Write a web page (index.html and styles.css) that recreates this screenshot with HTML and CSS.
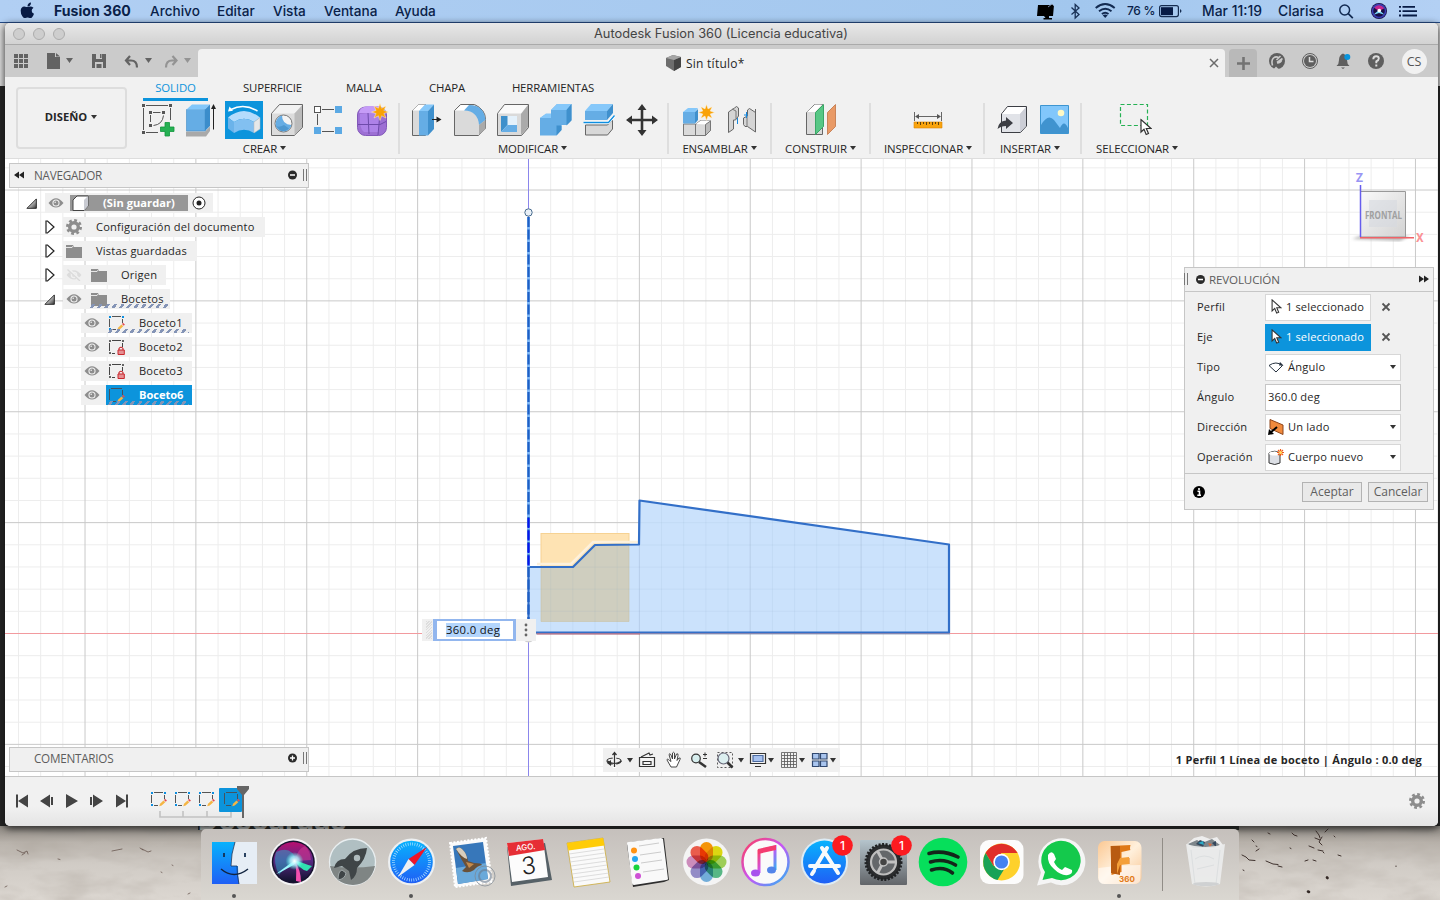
FILE: index.html
```html
<!DOCTYPE html>
<html lang="es">
<head>
<meta charset="utf-8">
<title>Autodesk Fusion 360 (Licencia educativa)</title>
<link rel="stylesheet" href="styles.css">
</head>
<body>
<svg class="defs" width="0" height="0" aria-hidden="true">
  <defs>
    <symbol id="eye" viewBox="0 0 16 12"><path d="M0.5 6Q8-3.5 15.500 6Q8 15 .5 6z" fill="#8d8d8d"/><circle cx="8" cy="6" r="3.600" fill="#f0f0f0"/><circle cx="8" cy="6" r="2.500" fill="#8d8d8d"/><circle cx="7.200" cy="5.200" r=".8" fill="#eee"/></symbol>
    <symbol id="eye-off" viewBox="0 0 16 12"><path d="M.5 6Q8-3.500 15.500 6Q8 15 .5 6z" fill="#dcdcdc"/><circle cx="8" cy="6" r="3.300" fill="#f0f0f0"/><circle cx="8" cy="6" r="2" fill="#dcdcdc"/><path d="M2 0L15 12" stroke="#f0f0f0" stroke-width="3"/><path d="M1.500 .5L14 12" stroke="#dadada" stroke-width="1.300"/></symbol>
    <symbol id="folder" viewBox="0 0 16 13"><path d="M0 0h7l1 2h8v11H0z" fill="#8d8d8d"/><path d="M0 2.500h6l1.200-1.600" stroke="#f0f0f0" fill="none" stroke-width=".9"/></symbol>
    <symbol id="gear" viewBox="0 0 16 16"><circle cx="8" cy="8" r="6.600" fill="none" stroke="#8d8d8d" stroke-width="2.800" stroke-dasharray="2.750 2.430"/><circle cx="8" cy="8" r="4.300" fill="none" stroke="#8d8d8d" stroke-width="3.400"/></symbol>
    <symbol id="sk" viewBox="0 0 17 16"><path d="M4 1.500h9M1.500 4v8M14.500 4v4M4 14.500h4" stroke="#555" fill="none"/><path d="M1 1h2v2H1zM14 1h2v2h-2zM1 13h2v2H1z" fill="#0d8ee0"/><path d="M9.200 15.300l.8-2.600 3.500-3.200 1.800 1.700-3.600 3.400z" fill="#f5b544"/><path d="M14 9l1-1.200 1.900 1.700-1.100 1.200z" fill="#e34b50"/></symbol>
    <symbol id="sk-sel" viewBox="0 0 17 16"><path d="M3 1.500h11M1.500 2v11M14.500 3v5M3 14.500h5" stroke="#46525e" fill="none"/><path d="M9.200 15.300l.8-2.600 3.500-3.200 1.800 1.700-3.600 3.400z" fill="#f5b544"/><path d="M14 9l1-1.200 1.900 1.700-1.100 1.200z" fill="#e34b50"/></symbol>
    <symbol id="sk-lock" viewBox="0 0 17 16"><path d="M4 1.500h9M1.500 4v8M14.500 4v4M4 14.500h3" stroke="#444" fill="none"/><path d="M1 1h2v2H1zM14 1h2v2h-2zM1 13h2v2H1z" fill="#666"/><path d="M11 11V9.500q2-2.500 4 0V11" stroke="#c9272c" fill="none" stroke-width="1.100"/><path d="M10 11h6.300v4.500H10z" fill="#e58f92" stroke="#c9272c"/></symbol>
    <symbol id="cursor" viewBox="0 0 12 17"><path d="M1 1v12.500l3-2.800 2.200 5.300 2.300-1-2.200-5H11z" fill="#fff" stroke="#333" stroke-width="1.200"/></symbol>
    <symbol id="star" viewBox="-9 -9 18 18"><path d="M0-8.500L1.600-3.800 6-6 3.900-1.600 8.500 0 3.900 1.600 6 6 1.600 3.800 0 8.500-1.600 3.800-6 6-3.900 1.600-8.500 0-3.900-1.600-6-6-1.600-3.800z" fill="#f9a207" stroke="#fff3d6" stroke-width=".5"/></symbol>
    <symbol id="close" viewBox="0 0 10 10"><path d="M1.500 1.500l7 7M8.500 1.500l-7 7" stroke="#555" stroke-width="1.800"/></symbol>
    <linearGradient id="tri" x1="0" y1="0" x2="1" y2="1"><stop offset=".3" stop-color="#eee"/><stop offset="1" stop-color="#333"/></linearGradient>
    <symbol id="tri-open" viewBox="0 0 12 12"><path d="M1 11.300L11.300 1v10.300z" fill="url(#tri)" stroke="#222"/></symbol>
    <symbol id="tri-closed" viewBox="0 0 10 14"><path d="M1 1h1.500L9 7l-6.500 6H1z" fill="#fff" stroke="#222" stroke-width="1.200"/></symbol>
    <linearGradient id="blueG" x1="0" y1="0" x2="0" y2="1"><stop offset="0" stop-color="#08b2fd"/><stop offset="1" stop-color="#1f5ff5"/></linearGradient>
    <radialGradient id="siri" cx=".55" cy=".5" r=".55"><stop offset="0" stop-color="#fff"/><stop offset=".22" stop-color="#72e4f4"/><stop offset=".55" stop-color="#513496"/><stop offset="1" stop-color="#150d35"/></radialGradient>
  </defs>
</svg>

<svg class="wallpaper" viewBox="0 0 1440 900" aria-hidden="true">
  <defs>
    <linearGradient id="sand" x1="0" y1="0" x2="0" y2="1"><stop offset="0" stop-color="#85817b"/><stop offset=".22" stop-color="#b9b3ac"/><stop offset=".5" stop-color="#d0cbc5"/><stop offset="1" stop-color="#dcd7d1"/></linearGradient>
    <filter id="grain" x="0" y="0" width="100%" height="100%"><feTurbulence type="fractalNoise" baseFrequency=".02 .05" numOctaves="4" seed="8"/><feColorMatrix values="0 0 0 0 .4 0 0 0 0 .36 0 0 0 0 .32 .8 0 0 0 -.3"/></filter>
  </defs>
  <rect width="1440" height="86" fill="#dedede"/><rect y="86" width="1440" height="745" fill="#242424"/>
  <rect y="826" width="1440" height="74" fill="url(#sand)"/>
  <rect y="826" width="1440" height="74" filter="url(#grain)"/>
  <rect x="198" y="820" width="1041" height="10" fill="#262a28"/>
  <g stroke="#5d4a43" fill="none" stroke-width=".7" stroke-linecap="round">
    <path d="M17 850l6 3 4-2 1 3M58 859l2 .5M112 851l10-2M142 849l6 3 3-1M22 855l3-2M172 865l1 .5M5 887l2-1M161 872l1 .5M188 894l2-1M140 848l3 2"/>
    <path stroke-width="1" stroke="#40332f" d="M1242 855l4 2 3 3 6 .5M1252 840l2 2M1256 846l1 .5M1266 861l7 3 5 .5M1278 866l4 1M1292 833l2 2 3 1M1309 846l5 2M1318 850l5 1M1316 831l3 4 1 3M1322 837l-3 5 3 3M1328 829l-3 3M1315 838l5 2M1305 861l3-1M1313 860l3 1M1323 852l1 1M1334 836l1 1M1338 855l3 1M1290 848l1 .5M1243 870l1 .5M1396 866v.5M1256 851l3-2M1268 833l2 1"/>
    <path stroke-width="2.600" stroke="#332825" d="M1308 891.500l1 .5M1327 877.500l.5.500"/>
  </g>
</svg>
<div class="desk-label">Descargas</div>

<header class="menubar">
  <svg class="apple" viewBox="20 2 15 17"><path d="M31 2.500q.2 2-1.200 3.200-1 1-2.300.8-.1-1.500.9-2.700 1.100-1.200 2.600-1.300zM33.500 7.700q-2 1.200-1.800 3.200.2 2 2.300 2.900-.6 1.700-1.700 3.100-.9 1.200-2 1.200-.8 0-1.500-.4-1.300-.5-2.500 0-1 .5-1.700.4-1-.1-2.100-1.700-2-3-1.800-6 .3-3.700 3.600-4 .9 0 2 .5.900.4 1.700 0 1-.5 2.100-.5 2 0 3.400 1.300z" fill="#071b45"/></svg>
  <nav class="menus"><b>Fusion 360</b><span>Archivo</span><span>Editar</span><span>Vista</span><span>Ventana</span><span>Ayuda</span></nav>
  <div class="status">
    <svg class="status-icons" viewBox="1035 0 90 22"><path d="M1038 5h16l-1 11h-16zM1044 16h5v2h3v1.500h-8.500V18h2z" fill="#000"/><path d="M1048 7l4-3 2 2" stroke="#7a8ea8" fill="none"/><path d="M1071.500 7.500l7.500 7-3.800 3.500V4.500l3.800 3.500-7.500 6.500" fill="none" stroke="#1a3256" stroke-width="1.300"/><g fill="none" stroke="#122a51" stroke-width="1.900"><path d="M1095.700 8q9.500-7.800 19 0M1099 11.200q6.300-5 12.500 0M1101.900 14q3.300-2.600 6.600 0"/></g><path d="M1102.700 15.300q2.500-1.700 5 0L1105.200 18z" fill="#122a51"/></svg>
    <span class="pct">76 %</span>
    <svg class="batt" viewBox="1158 4 25 14"><rect x="1159.600" y="5.600" width="18.800" height="11" rx="2" fill="none" stroke="#152c50" stroke-width="1.200"/><rect x="1161" y="7.200" width="12" height="8" fill="#071b45"/><path d="M1180 9q3 2 0 4z" fill="#152c50"/></svg>
    <span class="clock">Mar 11:19</span><span class="user">Clarisa</span>
    <svg class="status-end" viewBox="1335 0 90 22"><circle cx="1344.700" cy="10" r="4.900" fill="none" stroke="#122a51" stroke-width="1.500"/><path d="M1348.300 13.600l4.500 4.600" stroke="#122a51" stroke-width="1.700"/><circle cx="1379" cy="11" r="8" fill="#1a1045"/><path d="M1373 7q6-5 12 1l-6 3z" fill="#c4278f"/><path d="M1373 15l6-5 6 5-6-2z" fill="#7adcf7"/><circle cx="1379.300" cy="10.500" r="1.800" fill="#fff"/><circle cx="1379" cy="11" r="6.500" fill="none" stroke="#3b3fb5" stroke-width="1.500"/><path d="M1402.500 6.800H1415M1402.500 11.200H1417M1402.500 15.500H1417M1399 6.800h2M1399 11.200h2M1399 15.500h2" stroke="#071b45" stroke-width="1.800"/></svg>
  </div>
</header>

<main class="window">
  <div class="titlebar"><i></i><i></i><i></i><span class="apptitle">Autodesk Fusion 360 (Licencia educativa)</span></div>
  <div class="tabbar">
    <svg class="quick" viewBox="5 45 193 32"><path d="M14 54h4v4h-4zM19 54h4v4h-4zM24 54h4v4h-4zM14 59h4v4h-4zM19 59h4v4h-4zM24 59h4v4h-4zM14 64h4v4h-4zM19 64h4v4h-4zM24 64h4v4h-4z" fill="#636363"/><path d="M47 53h8v4h5v12H47zM56 53l4 3.500h-4zM66 58h7l-3.500 5z" fill="#636363"/><path d="M92 54h14v14H92z" fill="#636363"/><path d="M96 54h6v5h-6zM95 62h8v6h-8z" fill="#cbcbcb"/><path d="M100 54h1.500v4H100zM96.500 64h5v4h-5z" fill="#636363"/><path d="M130 56l-4 4.500 4 4.500M127 60.500h4q6 0 6 7" fill="none" stroke="#636363" stroke-width="2.200"/><path d="M145 58h7l-3.500 5z" fill="#636363"/><path d="M172.500 56l4 4.500-4 4.500M176 60.500h-4q-6 0-6 7" fill="none" stroke="#949494" stroke-width="2.200"/><path d="M184 58h7l-3.500 5z" fill="#949494"/></svg>
    <div class="doctab"><svg class="cube" viewBox="0 0 16 16"><path d="M0 3l7-3 8 2v10l-7 4-8-5z" fill="#6d6d6d"/><path d="M8 5l7-3v10l-7 4z" fill="#444"/><path d="M0 3l7-3 8 2-7 3z" fill="#a5a5a5"/></svg><span>Sin título*</span><svg class="tabclose" viewBox="0 0 10 10"><path d="M1 1l8 8M9 1L1 9" stroke="#6c6c6c" stroke-width="1.500"/></svg></div>
    <div class="newtab"><svg viewBox="0 0 14 14"><path d="M7 0v14M0 7h14" stroke="#737373" stroke-width="2.800"/></svg></div>
    <svg class="tabicons" viewBox="1257 45 143 32"><circle cx="1277" cy="61" r="8" fill="#5f5f5f"/><path d="M1272.500 65.500q-1.500-5 1-7.500 2.500-2 5-.5M1277 62.500l5.500-4M1276.500 60l4-4M1277 63q4-.5 4.500-3" fill="none" stroke="#cbcbcb" stroke-width="1.600"/><path d="M1273 70l3-3.500 3 3z" fill="#cbcbcb"/><circle cx="1310" cy="61" r="7.500" fill="none" stroke="#5f5f5f" stroke-width="1"/><circle cx="1310" cy="61" r="6" fill="#5f5f5f"/><path d="M1309.500 57v4.500h4" fill="none" stroke="#ddd" stroke-width="1.500"/><path d="M1336.500 66q2.500-2 2.500-6 0-5 4-6.500 4 1.500 4 6.500 0 4 2.500 6zM1341 67.500h4l-2 1.500z" fill="#5f5f5f"/><circle cx="1347.300" cy="57" r="3" fill="#0894dc"/><circle cx="1376" cy="61" r="8" fill="#5f5f5f"/><path d="M1373.300 59.200q0-3 2.900-3 2.600 0 2.600 2.300 0 1.700-2.500 2.900v1.800" fill="none" stroke="#ddd" stroke-width="1.900"/><path d="M1375.300 64.500h2v1.900h-2z" fill="#ddd"/></svg>
    <span class="avatar">CS</span>
  </div>

  <section class="ribbon">
    <div class="workspace">DISEÑO<i class="caret"></i></div>
    <div class="ribbon-body">
      <nav class="tabs"><span class="on">SOLIDO</span><span>SUPERFICIE</span><span>MALLA</span><span>CHAPA</span><span>HERRAMIENTAS</span></nav>
      <div class="groups">
        <div class="group crear"><div class="icons">
          <svg viewBox="137 100 43 40"><g fill="none" stroke="#555"><path d="M146 105.500h22M143.500 108v22M170.500 108v12M146 132.500h12M153 112.500h7.500M150.500 115v7M163.500 115.500q-1 9-10 10"/></g><path d="M142 104h3v3h-3zM169 104h3v3h-3zM142 131h3v3h-3zM149 111h3v3h-3zM162 111h3v3h-3zM149 124h3v3h-3z" fill="#555"/><path d="M165 122.500h4.500v4.500h4.500v4.500h-4.500v4.500H165v-4.500h-4.500V127h4.500z" fill="#25b153" stroke="#12963d" stroke-width=".8"/></svg>
          <svg viewBox="180 100 43 40"><path d="M186 131.500h19l5-5v4.500l-4 5.500h-20z" fill="#a9a9a9"/><path d="M186.500 109.500h18.700V131h-18.700z" fill="#65ade5" stroke="#3f8cc6" stroke-width=".6"/><path d="M186.500 109.500l5.500-5h18l-5 5z" fill="#82c7fa"/><path d="M205 109.500l5-5v21.500l-5 5z" fill="#3b8dcb"/><path d="M213.500 107v22.500" stroke="#222"/><path d="M211 109l2.500-5 2.500 5z" fill="#222"/></svg>
          <svg class="hot" viewBox="225 101 38 38"><path d="M231 109.500q13-6.500 26.500 1.500" fill="none" stroke="#fff" stroke-width="1.500"/><path d="M228 111.500l1.500-5 3.500 4.300z" fill="#fff"/><path d="M228 117.500q16-13 32 0l-6 4.500q-10-6.500-20 0z" fill="#b4dcfc"/><path d="M228 117.500l6 4.500v11l-6-4.500z" fill="#6bb3ea"/><path d="M234 122q10-6.500 20 0v11q-10-6.500-20 0z" fill="#82c0f1"/><path d="M254 122l6-4.500v11.500l-6 4z" fill="#e6e8e9" stroke="#bbb" stroke-width=".5"/></svg>
          <svg viewBox="266 100 43 40"><path d="M271.500 113.500l8-9h23v23l-8 8h-23z" fill="#dcdcdc" stroke="#666"/><path d="M272 113.500l8-8.500h22l-7.500 8.500z" fill="#f2f2f2"/><path d="M294.500 113.500l7.500-8v22l-7.500 8z" fill="#bbb"/><circle cx="283.500" cy="123.500" r="8.500" fill="#f4f4f4" stroke="#777"/><path d="M282 115.500q0 9 9.500 9.500-2 6.500-8 6.500-8-1-8-8 1-6.500 6.500-8z" fill="#66ade4"/><path d="M276 126q3 2 8-1l5 3.500q-4 4-9 2z" fill="#3e8bc3" opacity=".6"/></svg>
          <svg viewBox="307 100 43 40"><path d="M322 109.500h12M317.500 114v11M322 131.500h12" stroke="#555"/><rect x="314.500" y="106.500" width="6" height="6" fill="#fff" stroke="#555"/><path d="M335 106h7v7h-7zM314 127h7v7h-7zM335 127h7v7h-7z" fill="#5ba9e4"/></svg>
          <svg viewBox="350 100 43 40"><rect x="357.500" y="107" width="29" height="28.500" rx="8" fill="#9d70d4" stroke="#8258b9"/><path d="M359 113q0-6 10-7h9q7 2 3 8z" fill="#c59cf7"/><path d="M360 114h19v18h-15q-5-3-4-18z" fill="#ad82e8"/><path d="M368 113l1 21M380 113l-2 22M358 124.500h22l6-3" stroke="#6e4bab" stroke-width="1" fill="none"/><use href="#star" x="371" y="103" width="18" height="18"/></svg>
        </div><div class="glabel">CREAR<i class="caret"></i></div></div>
        <div class="group modificar"><div class="icons">
          <svg viewBox="405 100 43 40"><path d="M412.500 110.500l6-6h7v31h-13z" fill="#dadada" stroke="#666"/><path d="M412.500 110.500l6-6h7l-6 6z" fill="#fff"/><path d="M419 111h9v24.500h-9z" fill="#65ade5"/><path d="M419 111l6-6.500h9l-6 6.500z" fill="#86c8fa"/><path d="M428 111l6-6.500V129l-6 6.500z" fill="#3f90cd"/><path d="M432 119.500h6" stroke="#222" stroke-width="1.200"/><path d="M436.500 116.500l5 3-5 3z" fill="#222"/></svg>
          <svg viewBox="448 100 43 40"><path d="M454.500 110.500l6-6h14q11 5 11 15v9l-7 7h-24z" fill="#dadada" stroke="#666"/><path d="M455 110.500l6-5.500h9l-5 5.500z" fill="#fff"/><path d="M464 110.500l5-5.500q15 0 16.500 15l-6.500 5q-1-14-15-14.500z" fill="#65ade5"/><path d="M479 125l6.500-5v9l-6.500 6z" fill="#aaa"/></svg>
          <svg viewBox="491 100 43 40"><path d="M497.500 113.500l7-9h24v23l-7 8h-24z" fill="#dadada" stroke="#666"/><path d="M498 113.500l7-8.500h23l-7 8.500z" fill="#fafafa"/><path d="M521 114l7-9v22l-7 8z" fill="#aaa"/><path d="M501 116h16v16h-16z" fill="#e4f1fb"/><path d="M501 116h6.500v9l-6.500 7z" fill="#3e90cb"/><path d="M501 132l6.500-7H517v7z" fill="#65ade5"/></svg>
          <svg viewBox="534 100 43 40"><path d="M540 118l6-4h5v-4l6-6h14.500v16l-5 5h-5v5l-5 5.500H540z" fill="#65ade5"/><path d="M551 110l6-6h14.500l-5 6zM540 118l6-4.500h5v4.500z" fill="#86c8fa"/><path d="M566.500 110l5-6v16.500l-5 5zM556.500 125.500h5v4.500l-5 5.500z" fill="#3f90cd"/></svg>
          <svg viewBox="577 100 43 40"><path d="M585 111h22v9h-22z" fill="#65ade5"/><path d="M585 111l6-7h22l-6 7z" fill="#86c8fa"/><path d="M607 111l6-7v9l-6 7z" fill="#3f90cd"/><path d="M585.500 125h22l5-5v9l-5 6h-22z" fill="#d8d8d8" stroke="#666"/><path d="M583.500 122.500h25l6-7" stroke="#fff" stroke-width="3" fill="none"/><path d="M583.500 122.500h25l6-7" stroke="#0d8ee0" stroke-width="1.300" fill="none"/></svg>
          <svg viewBox="620 100 43 40"><path d="M642 107v26M630 120h24" stroke="#333" stroke-width="2.600"/><path d="M637.500 110l4.500-6 4.500 6zM637.500 130l4.500 6 4.500-6zM632 115.500l-6 4.500 6 4.500zM652 115.500l6 4.500-6 4.500z" fill="#333"/></svg>
        </div><div class="glabel">MODIFICAR<i class="caret"></i></div></div>
        <div class="group ensamblar"><div class="icons">
          <svg viewBox="677 100 43 40"><path d="M683.500 124h12v11.500h-12zM695.500 124.500l5-4h10v10l-5 5h-10z" fill="#dadada" stroke="#777"/><path d="M696 124l5-3.500h10l-5 4z" fill="#fff"/><path d="M705.500 124.500l5-3.500v9.500l-5 5z" fill="#bbb" stroke="#777"/><path d="M683 112h12v11.500h-12z" fill="#65ade5"/><path d="M683 112l5-4h10l-3 4z" fill="#86c8fa"/><path d="M695 112l3-3v11l-3 3.500z" fill="#3f90cd"/><use href="#star" x="698" y="104" width="17" height="17"/></svg>
          <svg viewBox="720 100 43 40"><g fill="#d5d5d5" stroke="#666"><path d="M728.500 112l6-4q2-3 4 0v8l-3 4h-2v9l-5 3.500z"/><path d="M755.500 109v23l-8-5.500q-3 1-4-2V118l4-2v-6l2-1.500 6 4z"/></g><path d="M732 109l4 2v8M747 114v12" fill="none" stroke="#777"/><path d="M737.500 118v6M746.500 112v6M744 115h4" stroke="#1788dd"/></svg>
        </div><div class="glabel">ENSAMBLAR<i class="caret"></i></div></div>
        <div class="group construir"><div class="icons"><svg viewBox="799 100 43 40"><path d="M806.500 112.500l8-8h8v30h-16z" fill="#dadada" stroke="#666"/><path d="M807 112l8-7.500h7l-7 7.500z" fill="#fff"/><path d="M815.500 112.500l8-8v22l-8 8z" fill="#57c785" stroke="#3aa666"/><path d="M827.500 112.500l8-8v22l-8 8z" fill="#e99a66" stroke="#c9845a"/></svg></div><div class="glabel">CONSTRUIR<i class="caret"></i></div></div>
        <div class="group inspeccionar"><div class="icons"><svg viewBox="906 100 43 40"><path d="M914.500 112v9M941.500 112v9M917 116.500h22" stroke="#666"/><path d="M915 116.500l4-2.500v5zM941 116.500l-4-2.500v5z" fill="#555"/><path d="M914 122h28v6h-28z" fill="#f9a40e" stroke="#db8400" stroke-width=".6"/><path d="M917.500 122v2M920.500 122v3M923.500 122v2M926.500 122v3M929.500 122v2M932.500 122v3M935.500 122v2M938.500 122v3" stroke="#5e420d"/></svg></div><div class="glabel">INSPECCIONAR<i class="caret"></i></div></div>
        <div class="group insertar"><div class="icons">
          <svg viewBox="990 100 43 40"><path d="M1001.500 114l6-7.500h19V126l-6 6.500h-19z" fill="#e1e3e8" stroke="#3c3e44"/><path d="M1002 114l6-7h18l-6 7z" fill="#fff"/><path d="M1020 114l6-7v19l-6 6.500z" fill="#ccced6"/><path d="M997.500 129q1-8 8.500-8.500v-3.500l7 6-7 6V126q-5 0-8.500 3z" fill="#3c3e44"/></svg>
          <svg viewBox="1033 100 43 40"><path d="M1040.500 105.500h28v28h-28z" fill="#82c7fb" stroke="#3d95d1"/><path d="M1041 125q7-12 13-5l6 8q4-9 8 0v5h-27z" fill="#4093cf"/><circle cx="1061" cy="113" r="3.300" fill="#fff9c5"/></svg>
        </div><div class="glabel">INSERTAR<i class="caret"></i></div></div>
        <div class="group seleccionar"><div class="icons"><svg viewBox="1112 100 43 40"><path d="M1120.500 104.500h27v21h-27z" fill="none" stroke="#25b153" stroke-width="1.200" stroke-dasharray="4 2.400"/><use href="#cursor" x="1140" y="118.500" width="12" height="17"/></svg></div><div class="glabel">SELECCIONAR<i class="caret"></i></div></div>
      </div>
    </div>
  </section>

  <section class="viewport">
    <svg class="scene" viewBox="5 159 1433 617">
      <g id="grid"></g>
      <path d="M5 633.500h1433" stroke="#f29a9e"/><path d="M528.500 159v617" stroke="#8b86ec"/>
      <rect x="541" y="533.500" width="88" height="88" fill="#fee3b3" stroke="#f6d293"/>
      <path d="M537 564h34l22-22h46" stroke="#fdf1dc" stroke-width="2.500" fill="none"/>
      <path d="M528.500 567H573l22-22 44-.5.500-44L949 544.500v88H528.500z" fill="#cbe2fc"/>
      <path d="M541 567h32l22-22 34-.2v76.700h-88z" fill="#cfcebf" stroke="#c9c3a5" stroke-width=".6"/>
      <g id="shade" stroke="#7f99b8" stroke-opacity=".25"><path d="M639.400 545v87M750.200 516v116M861.100 532v100"/><path stroke-opacity=".1" d="M529 611.300h420M529 589.200h420M550.700 567v65M572.800 567v65M595 545v87M617.200 545v87M661.500 504v128M683.700 507v125M705.900 510v122M728 513v119M772.400 520v112M794.600 523v109M816.700 526v106M838.900 529v103M883.300 535v97M905.400 538v94M927.600 542v90M529 567.100h420M640 545h309M640 522.700h150"/></g>
      <path d="M528.500 567H573l22-22 44-.5.500-44L949 544.500v88H528.500z" fill="none" stroke="#326fc8" stroke-width="2.200" stroke-linejoin="round"/>
      <path d="M530 634h420" stroke="#7088aa" stroke-width=".7"/><path d="M537 634h103" stroke="#d3606f" stroke-width=".8"/>
      <path d="M528.500 217v350" stroke="#80b8f6" stroke-width="3"/><path d="M528.500 217v416" stroke="#1f5fc4" stroke-width="2.200" stroke-dasharray="10 2.500"/><path d="M528.500 518v48" stroke="#0813ee" stroke-width="2" stroke-dasharray="10 2.500"/>
      <circle cx="528.500" cy="212.500" r="3.700" fill="#e9f0f7" stroke="#496c8e"/>
      <circle cx="528.500" cy="636" r="6.500" fill="#d1d1d1"/>
      <defs><linearGradient id="cubeG" x2="1" y2="1"><stop stop-color="#fafafa"/><stop offset="1" stop-color="#d2d2d2"/></linearGradient><filter id="soft"><feGaussianBlur stdDeviation="1.500"/></filter></defs>
      <path d="M1352 239l8-3h50l-10 5z" fill="#b8b8b8" filter="url(#soft)"/>
      <path d="M1360.500 191.500h45V237h-45z" fill="url(#cubeG)" stroke="#999"/><path d="M1369 200h28v27h-28z" fill="#d5d8df" opacity=".6"/>
      <path d="M1360.500 185v52" stroke="#665ded" stroke-width="1.500"/><path d="M1360 237.700h54" stroke="#ef6267" stroke-width="1.600"/>
      <text x="1365" y="218.500" class="face" textLength="37" lengthAdjust="spacingAndGlyphs">FRONTAL</text><text x="1359.500" y="181.500" class="axis z">Z</text><text x="1419.700" y="241.500" class="axis x">X</text>
    </svg>

    <aside class="navigator">
      <div class="panelhead"><svg class="chev" viewBox="0 0 10 8"><path d="M5 .5v7L0 4zM10 .5v7L5 4z" fill="#222"/></svg><span>NAVEGADOR</span><svg class="pm" viewBox="0 0 15 12"><circle cx="4.500" cy="6" r="4.500" fill="#2b2b2b"/><path d="M2 6h5" stroke="#fff" stroke-width="1.500"/></svg><i class="grip"></i></div>
      <ul class="tree">
        <li class="l0"><svg class="open" viewBox="0 0 12 12"><use href="#tri-open"/></svg><div class="node root"><svg class="eye"><use href="#eye"/></svg><b class="rootname"><svg viewBox="0 0 17 16"><path d="M1 5l4-4h11v10l-4 4.500H1z" fill="#fff" stroke="#444"/><path d="M12 5l4-4v10l-4 4.500z" fill="#c9cbd2"/></svg><span>(Sin guardar)</span></b><svg class="radio" viewBox="0 0 14 14"><circle cx="7" cy="7" r="6" fill="#fff" stroke="#222"/><circle cx="7" cy="7" r="2.500" fill="#222"/></svg></div></li>
        <li class="l1"><svg class="closed"><use href="#tri-closed"/></svg><div class="node config"><svg class="gear"><use href="#gear"/></svg><span>Configuración del documento</span></div></li>
        <li class="l1"><svg class="closed"><use href="#tri-closed"/></svg><div class="node vistas"><svg class="folder"><use href="#folder"/></svg><span>Vistas guardadas</span></div></li>
        <li class="l1"><svg class="closed"><use href="#tri-closed"/></svg><div class="node origen"><svg class="eye"><use href="#eye-off"/></svg><svg class="folder"><use href="#folder"/></svg><span>Origen</span></div></li>
        <li class="l1"><svg class="open"><use href="#tri-open"/></svg><div class="node bocetos"><svg class="eye"><use href="#eye"/></svg><svg class="folder"><use href="#folder"/></svg><span>Bocetos</span><i class="hatch"></i></div></li>
        <li class="l2"><div class="node"><svg class="eye"><use href="#eye"/></svg><div class="leaf"><svg class="sk"><use href="#sk"/></svg><span>Boceto1</span><i class="hatch"></i></div></div></li>
        <li class="l2"><div class="node"><svg class="eye"><use href="#eye"/></svg><div class="leaf"><svg class="sk"><use href="#sk-lock"/></svg><span>Boceto2</span></div></div></li>
        <li class="l2"><div class="node"><svg class="eye"><use href="#eye"/></svg><div class="leaf"><svg class="sk"><use href="#sk-lock"/></svg><span>Boceto3</span></div></div></li>
        <li class="l2"><div class="node"><svg class="eye"><use href="#eye"/></svg><div class="leaf sel"><svg class="sk"><use href="#sk-sel"/></svg><span>Boceto6</span><i class="hatch"></i></div></div></li>
      </ul>
    </aside>

    <aside class="dialog">
      <div class="dhead"><i class="grip"></i><svg class="pm" viewBox="0 0 9 9"><circle cx="4.500" cy="4.500" r="4.500" fill="#2b2b2b"/><path d="M2 4.500h5" stroke="#fff" stroke-width="1.500"/></svg><span>REVOLUCIÓN</span><svg class="chev" viewBox="0 0 10 8"><path d="M0 .5v7L5 4zM5 .5v7l5-3.500z" fill="#222"/></svg></div>
      <div class="form">
        <label>Perfil</label><div class="field pick"><svg class="cur"><use href="#cursor"/></svg>1 seleccionado</div><svg class="x"><use href="#close"/></svg>
        <label>Eje</label><div class="field pick active"><svg class="cur"><use href="#cursor"/></svg>1 seleccionado</div><svg class="x"><use href="#close"/></svg>
        <label>Tipo</label><div class="field drop"><svg class="fi" viewBox="0 0 16 16"><path d="M1 6.500q7-5 13.500 0L8 13z" fill="#fff" stroke="#25313e"/><path d="M12 3l3.500 3.500H11z" fill="#25313e"/></svg>Ángulo<i class="caret"></i></div>
        <label>Ángulo</label><div class="field text">360.0 deg</div>
        <label>Dirección</label><div class="field drop"><svg class="fi" viewBox="0 0 16 16"><path d="M2 .5L15 6v9.500L2 9.500z" fill="#f08a3c" stroke="#8d451a"/><path d="M2 14l7-6" stroke="#000" stroke-width="2"/><path d="M0 16l1-6 5 5z" fill="#000"/></svg>Un lado<i class="caret"></i></div>
        <label>Operación</label><div class="field drop"><svg class="fi" viewBox="0 0 16 16"><path d="M1 4q6-3.500 11 0v10q-5 3-11 0z" fill="#dcdfe5" stroke="#333"/><ellipse cx="6.500" cy="4.500" rx="5.500" ry="2" fill="#fff"/><path d="M12.500 0v7M9 3.500h7M10 1l5 5M15 1l-5 5" stroke="#ef5b17" stroke-width="1.200"/><circle cx="12.500" cy="3.500" r="1.500" fill="#ffe166"/></svg>Cuerpo nuevo<i class="caret"></i></div>
      </div>
      <div class="dfoot"><svg class="info" viewBox="0 0 12 12"><circle cx="6" cy="6" r="6" fill="#000"/><path d="M6 2v2M4.500 5.300h2v3.500M4.300 9.200h3.700" stroke="#fff" stroke-width="1.600" fill="none"/></svg><button>Aceptar</button><button>Cancelar</button></div>
    </aside>

    <div class="hud"><i class="dots"></i><span class="hudinput"><mark>360.0 deg</mark></span><svg viewBox="0 0 6 16"><circle cx="3" cy="3" r="1.400" fill="#666"/><circle cx="3" cy="8" r="1.400" fill="#666"/><circle cx="3" cy="13" r="1.400" fill="#666"/></svg></div>

    <svg class="navbar" viewBox="603 748 237 24">
      <g fill="none" stroke="#333" stroke-width="1.200"><ellipse cx="614" cy="761" rx="7" ry="3"/><path d="M614.500 752v16" stroke="#fff" stroke-width="3.500"/><path d="M614.500 767v-14M612.500 755l2-2.500 2 2.500" stroke-width="1.300"/><path d="M607.500 761q7 5 14 0"/><path d="M639.500 757.500h15v9h-15zM643 761.500h8v3h-8zM641 757l8-4 1 2 3-1" fill="#f4f4f4"/><path d="M671 767l-4-7q0-2 2.500.500l1.500 1-2-7q1-2 2 .500l1.500 4v-6q1-1.500 2 0v6l2-5q2-1 1.500 1.500l-1 5 2-2.500q2-.5 1 1.500l-3.500 7.500z" fill="#fff" stroke-width=".9"/><path d="M699 762l7 5" stroke-width="2.500"/><circle cx="696" cy="758.500" r="4.300" fill="#d7eeee"/><path d="M703 754.500h4M705 752.500v4M703 758.500h4" stroke-width="1"/><path d="M717.500 752.500h15v15h-15z" stroke-dasharray="2 2" stroke-width=".8"/><circle cx="723.500" cy="758.500" r="5.500" fill="#dceff0" stroke="#667"/><path d="M727.500 762.500l5 5" stroke-width="2.700"/><path d="M750.500 753.500h15v10h-15zM755 766.500h6" fill="#f4f4f4"/><path d="M753 755.500h10v6h-10z" fill="#a6c1ef" stroke="#4c6ba0"/><path d="M781.500 752.500h15v15h-15zM784.500 753v14M787.500 753v14M790.500 753v14M793.500 753v14M782 755.500h14M782 758.500h14M782 761.500h14M782 764.500h14" stroke="#555" stroke-width=".8"/><path d="M812.500 753.500h6.500v5.500h-6.500zM820.500 753.500h6.500v5.500h-6.500zM812.500 761h6.500v5.500h-6.500zM820.500 761h6.500v5.500h-6.500z" fill="#a9c5ef" stroke="#31486f"/></g>
      <path d="M607 763l4-3v6zM627 758h6l-3 4.500zM738 758h6l-3 4.500zM768 758h6l-3 4.500zM799 758h6l-3 4.500zM830 758h6l-3 4.500z" fill="#333"/>
    </svg>
    <div class="comments"><span>COMENTARIOS</span><svg class="pm" viewBox="0 0 15 12"><circle cx="4.500" cy="6" r="4.500" fill="#2b2b2b"/><path d="M2 6h5M4.500 3.500v5" stroke="#fff" stroke-width="1.300"/></svg><i class="grip"></i></div>
    <div class="readout">1 Perfil 1 Línea de boceto | Ángulo : 0.0 deg</div>
  </section>

  <footer class="timeline">
    <svg class="play" viewBox="5 777 145 49"><path d="M16 794.500h2v13h-2zM28 794.500v13l-10-6.500zM50 794.500v13l-10-6.500zM51 797h2v8h-2zM66 794l12 7-12 7zM90 797h2v8h-2zM93 794.500l10 6.500-10 6.500zM116 794.500l10 6.500-10 6.500zM126 794.500h2v13h-2z" fill="#444"/></svg>
    <svg class="steps" viewBox="150 777 105 49"><path d="M160 811v6h71v-6M183 811v6M207 811v6" fill="none" stroke="#c2c2c2" stroke-width="1.600"/><rect x="219" y="788" width="23" height="24" rx="1" fill="#0c94dc"/><use href="#sk" x="150" y="791" width="17" height="16"/><use href="#sk" x="174" y="791" width="17" height="16"/><use href="#sk" x="198" y="791" width="17" height="16"/><use href="#sk-sel" x="223" y="791" width="17" height="16"/><path d="M237 786h12v3l-5 6v23h-2v-23l-5-6z" fill="#666"/></svg>
    <svg class="gear settings"><use href="#gear"/></svg>
  </footer>
</main>

<nav class="dock">
  <svg viewBox="204 829 59 71"><path d="M212 842h45v42h-45z" fill="#e6edf5"/><path d="M212 842h23q-4 12-4 24h7q0 10 1 18h-27z" fill="url(#blueG)"/><path d="M235 842q-4 12-4 24h6q0 10 2 18" fill="none" stroke="#1c3658" stroke-width=".8"/><path d="M224 853v4M245 853v4" stroke="#163052" stroke-width="1.800"/><path d="M221 869q13 11 27 0" fill="none" stroke="#122440" stroke-width="1.500"/><circle cx="234" cy="896" r="2" fill="#555"/></svg>
  <svg viewBox="263 829 59 71"><defs><radialGradient id="glow"><stop stop-color="#fff"/><stop offset=".5" stop-color="#a8f4ff" stop-opacity=".8"/><stop offset="1" stop-color="#4fd" stop-opacity="0"/></radialGradient><linearGradient id="orb" x2="0" y2="1"><stop stop-color="#b90f70"/><stop offset=".45" stop-color="#5a2a86"/><stop offset="1" stop-color="#10122c"/></linearGradient></defs><circle cx="293.300" cy="862" r="23.500" fill="#f4f4f5"/><circle cx="293.300" cy="862" r="21.500" fill="#17122f"/><circle cx="293.300" cy="862" r="20" fill="url(#orb)"/><path d="M276 852q16-7 20 9-10 4-17 14-6-12-3-23z" fill="#2fa0c9" opacity=".55"/><path d="M276 874l19-14 2 3-16 9z" fill="#9df6ff"/><path d="M295 860q10 4 17 6l-5 5q-8-2-12-11z" fill="#2fe0b0"/><path d="M295 862q6 8 6 20l-5-1q1-10-1-19z" fill="#f34fb0"/><path d="M295 861q2-12 10-15 5 4 6 14z" fill="#c3338f" opacity=".7"/><circle cx="294.500" cy="861" r="9" fill="url(#glow)"/></svg>
  <svg viewBox="322 829 59 71"><circle cx="352.500" cy="862" r="23" fill="#b0bfc2" stroke="#e8eef0" stroke-width="1.300"/><path d="M330 866q22 3 45 0-4 18-22 19-19-1-23-19z" fill="#7f8584"/><path d="M334 868q2-9 11-9 8-11 22-11-1 11-10 20 0 8-6 12l-2-9-7-5z" fill="#3f4547"/><circle cx="357" cy="858" r="3.200" fill="#afbbbd"/><path d="M342 870q-4 1-4 10 7-1 8-7z" fill="#3f4547" stroke="#a0a8a9"/></svg>
  <svg viewBox="381 829 59 71"><circle cx="411.500" cy="862" r="23.500" fill="#edf0f2"/><circle cx="411.500" cy="862" r="21.300" fill="url(#blueG)"/><circle cx="411.500" cy="862" r="18" fill="none" stroke="#b2e2ff" stroke-width="3" stroke-dasharray=".7 1.600"/><path d="M427 847l-12.500 18-6-6z" fill="#ef1528"/><path d="M398 877l10.500-18 6 6z" fill="#eef0f2"/><circle cx="411" cy="896" r="2" fill="#555"/></svg>
  <svg viewBox="440 829 59 71"><path d="M450 843l36-5 6 44-37 5z" fill="#fafafa" stroke="#fff" stroke-width="2" stroke-dasharray="2 1.500"/><path d="M453 846l30-4 5 37-30 5z" fill="#3777ba"/><path d="M456 868l30-5 2 16-30 5z" fill="#6aa9da"/><path d="M456 849q3-3 6 0 5 5 6 12l6 2q8 0 8 2-5 1-8 5-6 4-12 1l4-4q-5-8-10-18z" fill="#6a5138"/><path d="M456 849q3-3 6 0 5 5 5 10-5-1-11-10z" fill="#d7cdbd"/><path d="M466 862l8 2-5 4z" fill="#c58b4c"/><circle cx="485" cy="876" r="10" fill="none" stroke="#7d8792" opacity=".7"/><circle cx="485" cy="876" r="6" fill="none" stroke="#6b7a8c" stroke-width="2" opacity=".6"/></svg>
  <svg viewBox="499 829 59 71"><path d="M507 847l38-4 7 37-41 6z" fill="#566167"/><path d="M507 843l36-4 5 38-36 5z" fill="#fcfcfc"/><path d="M507 843l36-4 2 11-36 6z" fill="#e62e35"/><text x="526" y="850" class="cal-month" transform="rotate(-6 526 850)">AGO.</text><text x="529" y="874" class="cal-day" transform="rotate(-6 529 870)">3</text></svg>
  <svg viewBox="558 829 59 71"><path d="M567 843l36-5 7 44-36 5z" fill="#fafafa" stroke="#cca938" stroke-width=".8"/><path d="M567 843l36-5 1.500 7.500-36 5z" fill="#ffcc08"/><path d="M569 854l35-5M569.600 858l35-5M570 862l36-5M571 866l36-5M572 870l35-5M572 874l36-5M573 878l36-5M574 882l35-5" stroke="#d0d0d0" stroke-width=".7"/></svg>
  <svg viewBox="617 829 59 71"><path d="M627 845l4-3 33-4 5 42-5 2-31 5z" fill="#2e2e2e"/><path d="M627 843q0-1 2-1l32-4 2 1 5 40q0 1-2 1l-32 5q-2 0-2-2z" fill="#f9f9f9"/><circle cx="634" cy="850.500" r="3" fill="#ff9314"/><circle cx="635" cy="859" r="3" fill="#23a6f2"/><circle cx="636.500" cy="867.500" r="3" fill="#18d33b"/><circle cx="638" cy="876" r="3" fill="#ce51d5"/><path d="M639 846l20-3M640 855l21-3M641 863l21-3M643 872l21-3" stroke="#ccc"/></svg>
  <svg class="photos" viewBox="676 829 59 71"><circle cx="706.500" cy="862" r="23.500" fill="#f4f4f4"/><rect x="700" y="842" width="13" height="20" rx="6.500" fill="#ff9b08"/><rect x="700" y="842" width="13" height="20" rx="6.500" fill="#e6e012" transform="rotate(45 706.500 862)"/><rect x="700" y="842" width="13" height="20" rx="6.500" fill="#a5d85c" transform="rotate(90 706.500 862)"/><rect x="700" y="842" width="13" height="20" rx="6.500" fill="#5cc08b" transform="rotate(135 706.500 862)"/><rect x="700" y="842" width="13" height="20" rx="6.500" fill="#77b5e3" transform="rotate(180 706.500 862)"/><rect x="700" y="842" width="13" height="20" rx="6.500" fill="#9a92cf" transform="rotate(225 706.500 862)"/><rect x="700" y="842" width="13" height="20" rx="6.500" fill="#d692c4" transform="rotate(270 706.500 862)"/><rect x="700" y="842" width="13" height="20" rx="6.500" fill="#f4604f" transform="rotate(315 706.500 862)"/></svg>
  <svg viewBox="735 829 59 71"><defs><linearGradient id="itunes" x2="1" y2="1"><stop stop-color="#ff3d58"/><stop offset=".5" stop-color="#c856f5"/><stop offset="1" stop-color="#23b8f4"/></linearGradient></defs><circle cx="765.500" cy="862" r="23" fill="#fafafa" stroke="url(#itunes)" stroke-width="2.500"/><path d="M759 873v-22l16-4v23" fill="none" stroke="url(#itunes)" stroke-width="3"/><path d="M758 849l18-4v5l-18 4z" fill="#f43c70"/><ellipse cx="755.500" cy="873" rx="4.500" ry="3.500" fill="#a852ed"/><ellipse cx="771.500" cy="870" rx="4.500" ry="3.500" fill="#5385ea"/></svg>
  <svg viewBox="794 829 59 71"><circle cx="824.500" cy="862" r="23.500" fill="#ddebf4"/><circle cx="824.500" cy="862" r="21.500" fill="url(#blueG)"/><path d="M827 848l-12 20M822 848l16 25M810 866h29M814 871l-2 3" stroke="#f7fafb" stroke-width="4" stroke-linecap="round"/><circle cx="842.500" cy="845.500" r="10.300" fill="#fc1b20"/><text x="842.500" y="850" class="badge">1</text></svg>
  <svg viewBox="853 829 59 71"><defs><linearGradient id="prefs" x2="0" y2="1"><stop stop-color="#b5c4cc"/><stop offset="1" stop-color="#626569"/></linearGradient></defs><rect x="860" y="840" width="47" height="45" rx="1" fill="url(#prefs)"/><circle cx="883.500" cy="862" r="17.500" fill="#2a2c2e" stroke="#202224" stroke-width="3" stroke-dasharray="2 1.500"/><circle cx="883.500" cy="862" r="12.500" fill="#64676a" stroke="#bdbdbd" stroke-width="2.200"/><path d="M883.500 862l-6-11M883.500 862l-6 11M883.500 862h13" stroke="#c1c1c1" stroke-width="3"/><circle cx="883.500" cy="862" r="4" fill="#444" stroke="#c1c1c1" stroke-width="1.500"/><circle cx="901.500" cy="845.500" r="10.300" fill="#fc1b20"/><text x="901.500" y="850" class="badge">1</text></svg>
  <svg viewBox="912 829 59 71"><circle cx="943" cy="862" r="24.300" fill="#06df5b"/><path d="M929 853.500q14-4 29 3.500M930.500 862q13-4 25 3M931.500 870q12-4 21 3" stroke="#14261a" stroke-width="3.600" fill="none" stroke-linecap="round"/></svg>
  <svg viewBox="971 829 59 71"><rect x="980" y="840" width="43.500" height="44" rx="9" fill="#fcfcfc"/><circle cx="1001.500" cy="862" r="18.500" fill="#fed12b"/><path d="M985.500 853a18.500 18.500 0 0 1 32 0h-16l-8 13z" fill="#e02e29"/><path d="M985.500 853a18.500 18.500 0 0 0 12 27l8-13-12-1z" fill="#18a257"/><circle cx="1001.500" cy="862" r="8.200" fill="#fff"/><circle cx="1001.500" cy="862" r="6.600" fill="#4582ef"/></svg>
  <svg viewBox="1030 829 59 71"><path d="M1037 885.500l4-13a23.500 23.500 0 1 1 10 10z" fill="#f5f5f5"/><path d="M1042.500 880l2.500-8a19.700 19.700 0 1 1 7 6z" fill="#14c94c"/><path d="M1048 855q3-5 6-1l2 5-2 3q3 6 8 8l3-3 7 3q1 4-4 5-7 1-14-6-7-6-6-14z" fill="#fff"/></svg>
  <svg viewBox="1089 829 59 71"><defs><linearGradient id="fus" x2="1" y2="1"><stop stop-color="#fbc893"/><stop offset=".5" stop-color="#fff0dc"/><stop offset="1" stop-color="#f8c491"/></linearGradient></defs><rect x="1098" y="841" width="43.500" height="43" rx="6.500" fill="url(#fus)"/><path d="M1098.500 868q22-3 42-3v13q0 6-7 6h-29q-6 0-6-6z" fill="#fff" opacity=".55"/><path d="M1110.500 846l20-1q-1 4 0 5l-9 2v6h8v6h-8v8l-10 3z" fill="#df7816"/><path d="M1111 846h9v29l-9-2z" fill="#b85b11"/><path d="M1120 858l9-1v7l-9 1-3 9v-10z" fill="#f4a03a"/><text x="1127" y="881.500" class="f360">360</text><circle cx="1119" cy="896" r="2" fill="#555"/></svg>
  <i class="dock-div"></i>
  <svg viewBox="1175 829 59 71"><path d="M1187 844l7-6 8-2 8 3 7-2 6 8-4 4h-29z" fill="#eee"/><path d="M1188 844l9-4 5 3 10-4 8 6-6 3h-21z" fill="#7e868b"/><path d="M1196 844l4-4 5 2-2 5zM1212 843l4-2v6z" fill="#35475c"/><path d="M1208 843l4 1-2 3z" fill="#d36a42"/><path d="M1198 843l5-2 1 4z" fill="#2dabc7"/><path d="M1186 844q19 6 39 0l-5 40q-14 5-28 0z" fill="#ebecec" opacity=".94"/><path d="M1191 850l4 34M1220 850l-4 34M1195 859q9-6 19 0M1197 869l17-4" stroke="#dcdfe0" fill="none"/><ellipse cx="1206" cy="884" rx="13" ry="2" fill="#cfd1d2"/></svg>
</nav>
<script src="grid.js"></script>
</body>
</html>
```
FILE: styles.css
```css
* { box-sizing: border-box; }
html, body { margin: 0; height: 100%; }
body { width: 1440px; height: 900px; position: relative; overflow: hidden; background: #cfcac4; font-family: "Open Sans", "Noto Sans", sans-serif; color: #262626; }
svg { display: block; flex: none; }
.defs { position: absolute; }
.wallpaper { position: absolute; left: 0; top: 0; width: 1440px; height: 900px; }
.desk-label { position: absolute; left: 198px; top: 803px; font: 700 28.500px/34px "Inter", sans-serif; color: #c3c8c5; }

.menubar { position: relative; height: 23px; display: flex; align-items: center; background: linear-gradient(90deg, #b1cff3, #a2c7ee 75%, #b3d0f4); border-bottom: 1px solid #234a86; font: 500 13.600px/22px "Inter", sans-serif; color: #0a1f49; padding-left: 20px; }
.apple { width: 15px; height: 17px; margin-bottom: 2px; }
.menus { display: grid; grid-template-columns: 96px 67px 56px 51px 71px 50px; margin-left: 19px; white-space: nowrap; }
.menus b { font-size: 14.100px; }
.status { margin-left: auto; display: flex; align-items: center; width: 405px; height: 22px; white-space: nowrap; }
.status-icons { width: 90px; height: 22px; }
.pct { width: 31px; margin-left: 2px; font-size: 12px; letter-spacing: -.3px; }
.batt { width: 25px; height: 14px; }
.clock { width: 76px; margin-left: 19px; font-size: 13.900px; }
.user { width: 57px; font-size: 13.900px; }
.status-end { width: 90px; height: 22px; }

.window { position: absolute; left: 5px; top: 23px; width: 1433px; height: 803px; border-radius: 5px; overflow: hidden; background: #f1f1f1; display: flex; flex-direction: column; box-shadow: 0 2px 7px 1px #111b; }
.titlebar { position: relative; height: 22px; flex: none; display: flex; align-items: center; gap: 8px; padding-left: 8px; background: linear-gradient(#e8e8e8, #d2d2d2); border-bottom: 1px solid #aaa; }
.titlebar i { width: 12px; height: 12px; border: 1px solid #acacac; border-radius: 50%; background: #cecece; }
.apptitle { margin-left: 521px; font: 400 12.800px/20px "Inter", sans-serif; color: #444; white-space: nowrap; }
.tabbar { height: 32px; flex: none; display: flex; background: #cbcbcb; }
.quick { width: 193px; height: 32px; }
.doctab { width: 1027px; margin-top: 4px; border-radius: 4px 4px 0 0; background: #f1f1f1; display: flex; align-items: center; font-size: 12px; letter-spacing: .25px; }
.cube { width: 16px; height: 16px; margin: 0 4px 0 468px; }
.tabclose { width: 10px; height: 10px; margin: 0 6px 0 auto; }
.newtab { width: 28px; margin: 4px 0 0 4px; border-radius: 4px 4px 0 0; background: #b9b9b9; display: flex; align-items: center; justify-content: center; }
.newtab svg { width: 13px; height: 13px; }
.tabicons { width: 143px; height: 32px; }
.avatar { width: 25px; height: 25px; margin: 4px 0 0 2px; border-radius: 50%; background: #f1f1f1; text-align: center; font-size: 12.500px; line-height: 25px; color: #555; padding-right: 1px; }

.ribbon { height: 82px; flex: none; display: flex; border-bottom: 1px solid #ddd; }
.workspace { width: 111px; height: 62px; margin: 10px 6px 0 11px; border: 2px solid #ddd; border-radius: 4px; display: flex; align-items: center; justify-content: center; font-size: 11.200px; font-weight: 700; padding: 0 1px 3px 0; }
.caret { display: inline-block; border: 3px solid transparent; border-top: 4px solid #333; border-bottom: 0; margin-left: 4px; }
.ribbon-body { flex: 1; }
.tabs { height: 23px; padding-left: 10px; display: grid; grid-template-columns: 65px 129px 54px 112px 100px; font-size: 11.400px; line-height: 21px; text-align: center; letter-spacing: -.15px; }
.tabs .on { color: #0c94dc; border-bottom: 3px solid #0c94dc; }
.groups { display: flex; height: 58px; }
.group { position: relative; display: flex; flex-direction: column; }
.group:not(:last-child)::after { content: ""; position: absolute; right: -1px; top: 3px; width: 2px; height: 51px; background: #dedede; }
.icons { height: 40px; display: flex; align-items: flex-start; }
.icons svg { width: 43px; height: 40px; }
.icons .hot { width: 38px; height: 38px; background: #0c94dc; margin: 1px 3px 0 2px; }
.glabel { height: 18px; text-align: center; font-size: 11.400px; line-height: 17px; white-space: nowrap; letter-spacing: -.1px; }
.glabel .caret { margin: 0 0 3px 3px; border-width: 4px 3px 0; }
.crear { width: 266px; } .crear .icons { padding-left: 4px; }
.crear .icons svg:nth-child(5) { margin-left: -2px; }
.crear .glabel { padding-right: 3px; }
.modificar { width: 269px; } .modificar .icons { padding-left: 6px; }
.modificar .glabel { padding-right: 2px; }
.ensamblar { width: 103px; } .ensamblar .icons { padding-left: 9px; }
.construir { width: 99px; } .construir .icons { padding-left: 28px; }
.inspeccionar { width: 114px; } .inspeccionar .icons { padding-left: 36px; }
.inspeccionar .glabel { padding-left: 2px; }
.insertar { width: 97px; } .insertar .icons { padding-left: 6px; }
.insertar .glabel { padding-right: 5px; }
.seleccionar { width: 112px; } .seleccionar .icons { padding-left: 31px; }

.viewport { position: relative; height: 618px; flex: none; background: #fff; border-bottom: 1px solid #c6c6c6; overflow: hidden; }
.scene { width: 1433px; height: 617px; }
.face { font: 700 10.500px "Open Sans", sans-serif; fill: #a0a0a0; }
.axis { font: 700 12px "Roboto", sans-serif; text-anchor: middle; }
.z { fill: #9995f4; } .x { fill: #fb9296; }

.navigator { position: absolute; left: 4px; top: 4px; width: 300px; }
.panelhead, .comments { width: 300px; height: 25px; border: 1px solid #c6c6c6; background: #f0f0f0; display: flex; align-items: center; font-size: 11.700px; letter-spacing: -.25px; color: #5c5c5c; padding: 0 1px 2px 4px; }
.panelhead span { margin-left: 10px; }
.panelhead .chev { width: 10px; height: 8px; }
.pm { width: 15px; height: 12px; margin-left: auto; }
.grip { width: 4px; height: 12px; border-left: 1px solid #777; border-right: 1px solid #777; flex: none; }
.tree { list-style: none; margin: 3px 0 0; padding: 0; font-size: 11.100px; letter-spacing: .2px; }
.tree span { position: relative; top: -1px; }
.tree li { height: 24px; display: flex; align-items: center; }
.l0 { padding-left: 17px; } .l1 { padding-left: 36px; } .l2 { padding-left: 72px; }
.open { width: 11px; height: 11px; margin: 0 8px 0 0; }
.l1 .open { margin: 0 8px 0 -1px; }
.closed { width: 10px; height: 14px; margin-right: 8px; }
.node { height: 20px; background: #f0f0f0; display: flex; align-items: center; position: relative; white-space: nowrap; }
.root { width: 168px; padding-left: 3px; }
.eye { width: 16px; height: 12px; }
.rootname { width: 118px; height: 16px; margin: 0 4px 0 6px; background: #979797; color: #fff; display: flex; align-items: center; padding-left: 2px; letter-spacing: .05px; }
.rootname svg { width: 17px; height: 16px; margin-right: 14px; }
.radio { width: 14px; height: 14px; }
.config { width: 202px; } .vistas { width: 134px; } .origen { width: 103px; } .bocetos { width: 107px; }
.gear { width: 16px; height: 16px; }
.folder { width: 16px; height: 13px; }
.l1 .node { padding-left: 3px; }
.l1 .node > span { margin-left: 14px; }
.l1 .eye + .folder { margin-left: 9px; }
.l2 .node { width: 111px; padding-left: 3px; }
.leaf { position: relative; width: 86px; height: 20px; margin-left: 6px; display: flex; align-items: center; }
.sk { width: 17px; height: 16px; margin: 0 14px 0 2px; }
.sel { background: #0c94dc; color: #fff; font-weight: 700; letter-spacing: -.05px; }
.hatch { position: absolute; left: 0; right: 3px; bottom: 0; height: 4px; background: repeating-linear-gradient(125deg, transparent 0 3.500px, #8494b6 3.500px 6px); }
.bocetos .hatch { left: 25px; right: 0; bottom: 1px; }

.dialog { position: absolute; left: 1179px; top: 108px; width: 250px; height: 243px; background: #f0f0f0; border: 1px solid #c6c6c6; font-size: 11.100px; letter-spacing: .2px; }
.dhead { height: 24px; border-bottom: 1px solid #c6c6c6; display: flex; align-items: center; font-size: 11.600px; letter-spacing: -.15px; color: #5c5c5c; padding: 0 4px 1px 0; }
.dhead .grip { margin-left: -1px; }
.dhead .pm { width: 9px; height: 9px; margin: 0 4px 0 8px; }
.dhead .chev { width: 10px; height: 8px; margin-left: auto; }
.form { display: grid; grid-template-columns: 68px 106px 1fr; grid-auto-rows: 30px; align-items: center; height: 182px; padding-left: 12px; border-bottom: 1px solid #c6c6c6; }
.form label { padding-bottom: 2px; }
.field { height: 27px; background: #fff; border: 1px solid #d7d7d7; display: flex; align-items: center; white-space: nowrap; padding-bottom: 1px; }
.pick { letter-spacing: .12px; }
.pick .cur { width: 11px; height: 15px; margin: 0 4px 0 5px; }
.active { background: #0c94dc; border-color: #0c94dc; color: #fff; }
.x { width: 10px; height: 10px; margin: 0 0 1px 10px; }
.drop, .text { grid-column: 2 / 4; width: 136px; }
.text { padding-left: 2px; border-color: #c6c6c6; }
.fi { width: 16px; height: 16px; margin: 0 4px 0 2px; }
.drop .caret { margin: 0 4px 0 auto; border-width: 4px 3px 0; }
.dfoot { height: 35px; display: flex; align-items: center; padding: 0 5px 0 8px; gap: 6px; }
.info { width: 12px; height: 12px; margin-right: auto; }
.dfoot button { width: 60px; height: 20px; padding: 0; border: 1px solid #b3b3b3; background: #e9e9e9; color: #5e5e5e; font: 12px/18px "Open Sans", sans-serif; }

.hud { position: absolute; left: 417px; top: 460px; height: 22px; width: 114px; display: flex; align-items: center; background: #f0f0f0; }
.dots { width: 6px; height: 18px; margin: 0 1px 0 4px; background: repeating-linear-gradient(135deg, #ddd 0 1px, transparent 1px 2px); }
.hudinput { width: 83px; height: 22px; border: solid #92b6ee; border-width: 2px 3px 2px 4px; background: #fff; line-height: 18px; font-size: 11.300px; padding-left: 9px; }
.hudinput mark { background: #b3d5fc; color: #111; display: inline-block; line-height: 14px; letter-spacing: .35px; }
.hud svg { width: 6px; height: 16px; margin-left: 7px; }
.navbar { position: absolute; left: 598px; top: 589px; width: 237px; height: 24px; background: #f0f0f0; }
.comments { position: absolute; left: 4px; top: 588px; padding-left: 24px; padding-bottom: 3px; }
.readout { position: absolute; right: 16px; bottom: 8px; font-size: 11px; font-weight: 700; line-height: 16px; white-space: nowrap; letter-spacing: .26px; }

.timeline { height: 49px; display: flex; background: linear-gradient(#f1f1f1 60%, #e4e4e4); }
.play { width: 145px; height: 49px; }
.steps { width: 105px; height: 49px; }
.settings { margin: 16px 13px 0 auto; }

.dock { position: absolute; left: 201px; top: 829px; width: 1038px; height: 71px; border-radius: 5px 5px 0 0; background: linear-gradient(#c5c0bc, #dad7d1); display: flex; padding-left: 3px; }
.dock svg { width: 59px; height: 71px; }
.photos { isolation: isolate; }
.photos rect { mix-blend-mode: multiply; }
.dock-div { width: 1px; height: 53px; margin: 9px 12px 0 14px; background: #918d87; }
.cal-month { font: 500 8px "Inter", sans-serif; fill: #fff; text-anchor: middle; }
.cal-day { font: 300 24px "Inter", sans-serif; fill: #222; text-anchor: middle; }
.badge { font: 500 12px "Inter", sans-serif; fill: #fff; text-anchor: middle; }
.f360 { font: 700 8px "Inter", sans-serif; fill: #e27a16; text-anchor: middle; }
```
FILE: grid.js
```js
const grid = document.getElementById("grid");
const step = 110.87 / 5;
function line(d, major) {
  const p = document.createElementNS("http://www.w3.org/2000/svg", "path");
  p.setAttribute("d", d);
  p.setAttribute("stroke", major ? "#c9c9c9" : "#ededed");
  grid.appendChild(p);
}
for (const major of [false, true]) {
  for (let i = -24; i <= 42; i++) {
    if ((i % 5 === 0) === major) line(`M${(528.5 + i * step).toFixed(2)} 159v617`, major);
  }
  for (let i = -21; i <= 6; i++) {
    if ((i % 5 === 0) === major) line(`M5 ${(633.5 + i * step).toFixed(2)}h1433`, major);
  }
}
```
